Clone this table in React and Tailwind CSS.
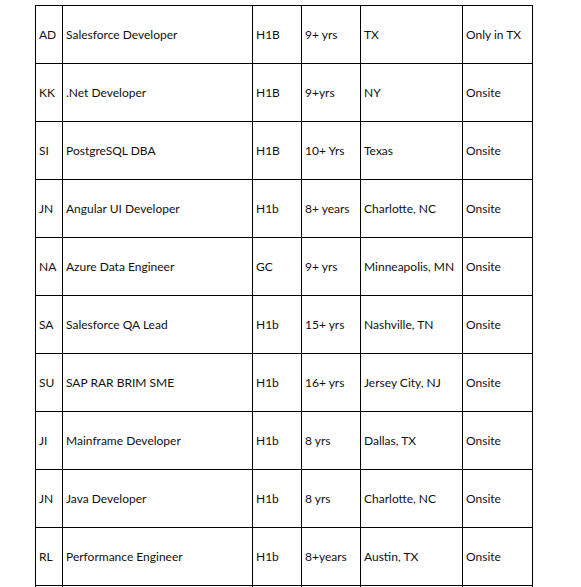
import React from "react";

const rows = [
  ["AD", "Salesforce Developer", "H1B", "9+ yrs", "TX", "Only in TX"],
  ["KK", ".Net Developer", "H1B", "9+yrs", "NY", "Onsite"],
  ["SI", "PostgreSQL DBA", "H1B", "10+ Yrs", "Texas", "Onsite"],
  ["JN", "Angular UI Developer", "H1b", "8+ years", "Charlotte, NC", "Onsite"],
  ["NA", "Azure Data Engineer", "GC", "9+ yrs", "Minneapolis, MN", "Onsite"],
  ["SA", "Salesforce QA Lead", "H1b", "15+ yrs", "Nashville, TN", "Onsite"],
  ["SU", "SAP RAR BRIM SME", "H1b", "16+ yrs", "Jersey City, NJ", "Onsite"],
  ["JI", "Mainframe Developer", "H1b", "8 yrs", "Dallas, TX", "Onsite"],
  ["JN", "Java Developer", "H1b", "8 yrs", "Charlotte, NC", "Onsite"],
  ["RL", "Performance Engineer", "H1b", "8+years", "Austin, TX", "Onsite"],
  ["", "", "", "", "", ""],
];

export default function App() {
  return (
    <div className="bg-white w-[581px] h-[587px] overflow-hidden pt-[5px] pl-[35px]">
      <div
        className="grid grid-cols-[26px_189px_48px_58px_101px_69px] auto-rows-[57px] gap-px bg-black p-px w-[498px] text-[12px] text-[#111]"
        style={{ fontFamily: "Lato, 'Liberation Sans', sans-serif" }}
      >
        {rows.map((r, i) =>
          r.map((c, j) => (
            <div key={i + "-" + j} className="bg-white flex items-center pl-[3px] pt-[1px] whitespace-nowrap overflow-hidden">
              {c}
            </div>
          ))
        )}
      </div>
    </div>
  );
}
